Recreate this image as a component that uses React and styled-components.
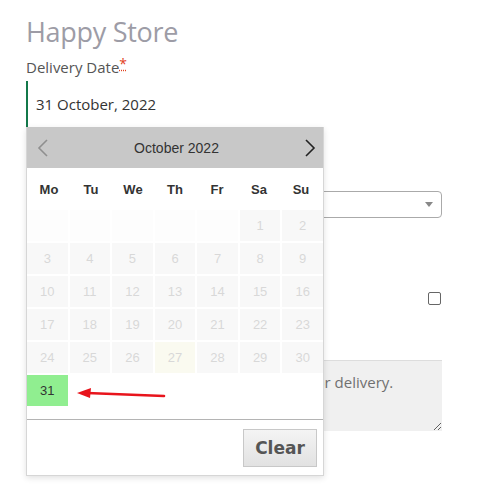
import styled, { createGlobalStyle } from "styled-components";

const GlobalStyle = createGlobalStyle`
    body {
        margin: 0;
        background: #fff;
        font-family: "Open Sans", "Liberation Sans", sans-serif;
    }
`;

const weekdays = ["Mo", "Tu", "We", "Th", "Fr", "Sa", "Su"];

// october 2022 starts on a saturday
const days = [
    ...Array(5).fill(null),
    ...Array.from({ length: 31 }, (_, i) => i + 1),
];

export default function App() {
    return (
        <Page>
            <GlobalStyle />
            <Title>Happy Store</Title>
            <Label>
                Delivery Date<Required title="required">*</Required>
            </Label>
            <DateField>
                <DateInput>31 October, 2022</DateInput>
                <Popup>
                    <PopupHeader>
                        <NavButton $muted>
                            <svg width="12" height="18" viewBox="0 0 12 18">
                                <polyline points="10,1 2,9 10,17" fill="none" stroke="currentColor" strokeWidth="1.6" />
                            </svg>
                        </NavButton>
                        <MonthTitle>October 2022</MonthTitle>
                        <NavButton>
                            <svg width="12" height="18" viewBox="0 0 12 18">
                                <polyline points="2,1 10,9 2,17" fill="none" stroke="currentColor" strokeWidth="1.6" />
                            </svg>
                        </NavButton>
                    </PopupHeader>
                    <Weekdays>
                        {weekdays.map((d) => (
                            <Weekday key={d}>{d}</Weekday>
                        ))}
                    </Weekdays>
                    <DayGrid>
                        {days.map((day, i) => (
                            <Day
                                key={i}
                                $empty={day === null}
                                $today={day === 27}
                                $selected={day === 31}
                            >
                                {day}
                            </Day>
                        ))}
                    </DayGrid>
                    <PopupFooter>
                        <ClearButton>Clear</ClearButton>
                    </PopupFooter>
                </Popup>
            </DateField>

            {/* labels of these fields sit under the calendar popup */}
            <Field>
                <Label />
                <SelectBox>
                    <Caret />
                </SelectBox>
            </Field>

            <CheckRow>
                <Label />
                <CheckBox />
            </CheckRow>

            <Notes
                readOnly
                defaultValue="Please leave any special instructions for delivery."
            />

            <Annotation width="92" height="16" viewBox="0 0 92 16">
                <line x1="89" y1="10" x2="12" y2="7" stroke="#e8141c" strokeWidth="2.6" strokeLinecap="round" />
                <polygon points="2,7 16,2 15,12" fill="#e8141c" />
            </Annotation>
        </Page>
    );
}

const Page = styled.div`
    position: relative;
    width: 416px;
    padding: 14px 0 0 26px;
    min-height: 490px;
`;

const Title = styled.h1`
    margin: 0;
    font-weight: 400;
    font-size: 27px;
    line-height: 36px;
    color: #9d9ca6;
    letter-spacing: -0.3px;
`;

const Label = styled.div`
    margin-top: 7px;
    min-height: 20px;
    font-size: 15px;
    line-height: 20px;
    color: #555;
`;

const Required = styled.abbr`
    color: #e2401c;
    text-decoration: underline dotted;
    font-size: 14px;
    vertical-align: top;
    line-height: 14px;
`;

const DateField = styled.div`
    position: relative;
    margin-top: 4px;
`;

const DateInput = styled.div`
    height: 46px;
    box-sizing: border-box;
    border-left: 2px solid #13784a;
    padding-left: 8px;
    display: flex;
    align-items: center;
    font-size: 15px;
    color: #333;
`;

const Popup = styled.div`
    position: absolute;
    top: 46px;
    left: 0;
    z-index: 2;
    width: 298px;
    box-sizing: border-box;
    background: #fff;
    border: 1px solid #d6d6d6;
    border-top: none;
    box-shadow: 0 2px 6px rgba(0, 0, 0, 0.12);
    font-family: "Liberation Sans", Arial, sans-serif;
`;

const PopupHeader = styled.div`
    height: 41px;
    background: #c8c8c8;
    display: flex;
    align-items: center;
    justify-content: space-between;
    padding: 0 7px 0 10px;
`;

const NavButton = styled.span`
    display: flex;
    color: ${(p) => (p.$muted ? "#8f8f8f" : "#222")};
`;

const MonthTitle = styled.span`
    font-size: 14px;
    color: #333;
`;

const Weekdays = styled.div`
    display: grid;
    grid-template-columns: repeat(7, 1fr);
    height: 42px;
    align-items: center;
    padding: 0 1px;
`;

const Weekday = styled.span`
    text-align: center;
    font-size: 13px;
    font-weight: 700;
    color: #333;
`;

const DayGrid = styled.div`
    display: grid;
    grid-template-columns: repeat(7, 1fr);
    grid-auto-rows: 31px;
    gap: 2px;
`;

const Day = styled.span`
    display: flex;
    align-items: center;
    justify-content: center;
    font-size: 13px;
    color: ${(p) => (p.$selected ? "#333" : "#d8d8d8")};
    background: ${(p) =>
        p.$selected ? "#90ee90" : p.$today ? "#fafaf0" : p.$empty ? "#fdfdfd" : "#f8f8f8"};
`;

const PopupFooter = styled.div`
    margin-top: 13px;
    border-top: 1px solid #b4b4b4;
    display: flex;
    justify-content: flex-end;
    padding: 9px 6px 8px;
`;

const ClearButton = styled.button`
    width: 74px;
    height: 38px;
    border: 1px solid #c8c8c8;
    background: linear-gradient(#f4f4f4, #e2e2e2);
    font-family: "DejaVu Sans", Verdana, sans-serif;
    font-weight: 700;
    font-size: 17px;
    color: #555;
    padding: 0;
`;

const Field = styled.div`
    margin-top: 38px;
`;

const SelectBox = styled.div`
    margin-top: 6px;
    height: 27px;
    box-sizing: border-box;
    border: 1px solid #aaa;
    border-radius: 4px;
    display: flex;
    align-items: center;
    justify-content: flex-end;
    padding-right: 8px;
`;

const Caret = styled.span`
    width: 0;
    height: 0;
    border-left: 4px solid transparent;
    border-right: 4px solid transparent;
    border-top: 5px solid #888;
`;

const CheckRow = styled.div`
    margin-top: 70px;
    display: flex;
    align-items: center;
    justify-content: space-between;
    div {
        margin-top: 0;
    }
`;

const CheckBox = styled.span`
    width: 13px;
    height: 13px;
    box-sizing: border-box;
    border: 1px solid #666;
    border-radius: 2px;
    margin-right: 1px;
`;

const Notes = styled.textarea`
    display: block;
    margin: 52px 0 0;
    width: 100%;
    height: 71px;
    box-sizing: border-box;
    background: #f0f0f0;
    border: none;
    border-top: 1px solid #ddd;
    outline: none;
    padding: 10px 10px 10px 28px;
    font-family: "Open Sans", "Liberation Sans", sans-serif;
    font-size: 15px;
    line-height: 22px;
    color: #707070;
`;

const Annotation = styled.svg`
    position: absolute;
    left: 75px;
    top: 386px;
    z-index: 3;
`;
